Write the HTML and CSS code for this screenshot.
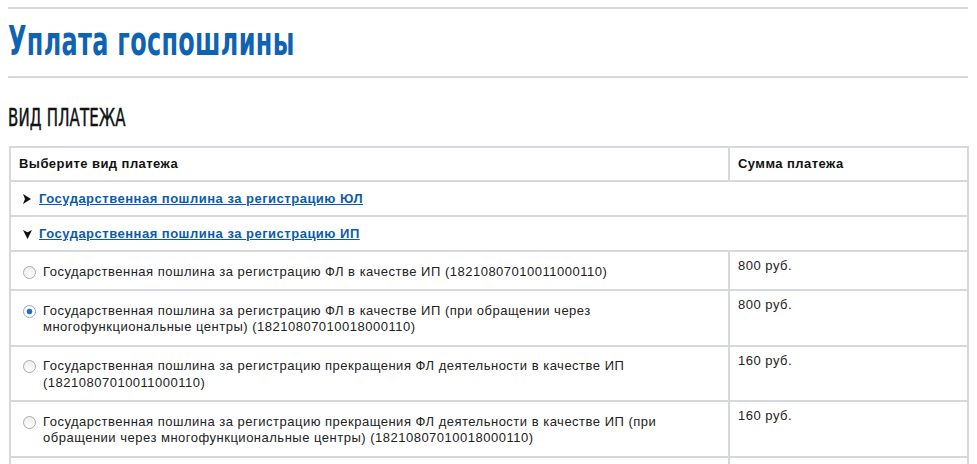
FILE: index.html
```html
<!DOCTYPE html>
<html lang="ru">
<head>
    <meta charset="UTF-8">
    <title>Уплата госпошлины</title>
    <link rel="stylesheet" href="styles.css">
</head>
<body>
<div class="page">
    <div class="page_title">
        <h1><span>Уплата госпошлины</span></h1>
    </div>
    <h2 class="section_title"><span>Вид платежа</span></h2>
    <table class="pay_table">
        <colgroup>
            <col class="col_name">
            <col class="col_sum">
        </colgroup>
        <tr class="head_row">
            <th>Выберите вид платежа</th>
            <th>Сумма платежа</th>
        </tr>
        <tr class="group_row">
            <td colspan="2">
                <svg class="arrow arrow_right" width="8" height="10" viewBox="0 0 8 10"><path d="M0 0 L8 5 L0 10 L2 5 Z"/></svg><a href="#">Государственная пошлина за регистрацию ЮЛ</a>
            </td>
        </tr>
        <tr class="group_row">
            <td colspan="2">
                <svg class="arrow arrow_down" width="9" height="9" viewBox="0 0 9 9"><path d="M0 0 L4.5 2.2 L9 0 L4.5 9 Z"/></svg><a href="#">Государственная пошлина за регистрацию ИП</a>
            </td>
        </tr>
        <tr class="item_row">
            <td>
                <label><input type="radio" name="pay"><span>Государственная пошлина за регистрацию ФЛ в качестве ИП (18210807010011000110)</span></label>
            </td>
            <td class="sum">800 руб.</td>
        </tr>
        <tr class="item_row">
            <td>
                <label><input type="radio" name="pay" checked><span>Государственная пошлина за регистрацию ФЛ в качестве ИП (при обращении через многофункциональные центры) (18210807010018000110)</span></label>
            </td>
            <td class="sum">800 руб.</td>
        </tr>
        <tr class="item_row">
            <td>
                <label><input type="radio" name="pay"><span>Государственная пошлина за регистрацию прекращения ФЛ деятельности в качестве ИП (18210807010011000110)</span></label>
            </td>
            <td class="sum">160 руб.</td>
        </tr>
        <tr class="item_row">
            <td>
                <label><input type="radio" name="pay"><span>Государственная пошлина за регистрацию прекращения ФЛ деятельности в качестве ИП (при обращении через многофункциональные центры) (18210807010018000110)</span></label>
            </td>
            <td class="sum">160 руб.</td>
        </tr>
        <tr class="item_row">
            <td>&nbsp;</td>
            <td class="sum">&nbsp;</td>
        </tr>
    </table>
</div>
</body>
</html>
```

FILE: styles.css
```css
html, body {
    margin: 0px;
    background-color: #fff;
    font-family: "Liberation Sans", Arial, sans-serif;
    font-size: 13px;
    letter-spacing: 0.5px;
    color: #222;
}

.page {
    padding: 7px 9px 0 8px;
}

.page_title {
    border-top: 2px solid #d5d9de;
    border-bottom: 2px solid #d5d9de;
    height: 67px;
}

.page_title h1 {
    margin: 0;
    padding-top: 8px;
    font-family: "DejaVu Sans Condensed", "DejaVu Sans", sans-serif;
    font-stretch: condensed;
    font-weight: bold;
    font-size: 40px;
    line-height: 48px;
    letter-spacing: 0.5px;
    color: #0f63b2;
}

.page_title h1 span,
.section_title span {
    display: inline-block;
    transform-origin: left center;
}

.page_title h1 span {
    transform: scaleX(0.665);
}

.section_title {
    margin: 0;
    padding-top: 25px;
    height: 43px;
    font-family: "DejaVu Sans Condensed", "DejaVu Sans", sans-serif;
    font-stretch: condensed;
    font-weight: normal;
    font-size: 25px;
    line-height: 30px;
    letter-spacing: 0.3px;
    text-transform: uppercase;
    color: #111;
    -webkit-text-stroke: 0.5px #111;
}

.section_title span {
    transform: scaleX(0.665);
}

.pay_table {
    width: 960px;
    border-collapse: collapse;
    table-layout: fixed;
    margin-left: 1px;
}

.col_name {
    width: 719px;
}

.pay_table th,
.pay_table td {
    border: 2px solid #d5d9de;
    text-align: left;
    vertical-align: top;
    line-height: 16px;
    padding: 0 8px;
}

.head_row th {
    padding-top: 8px;
    padding-bottom: 8px;
    font-weight: bold;
    letter-spacing: 0.45px;
    color: #111;
}

.group_row td {
    padding-top: 9px;
    padding-bottom: 8px;
    padding-left: 12px;
}

.group_row .arrow {
    fill: #111;
    vertical-align: -1px;
}

.group_row .arrow_right {
    margin-right: 8px;
}

.group_row .arrow_down {
    margin-right: 7px;
}

.group_row a {
    color: #0a5ca8;
    font-weight: bold;
    letter-spacing: 0.5px;
    text-decoration: underline;
}

.item_row td {
    padding-top: 11.5px;
    padding-bottom: 9px;
    line-height: 16.5px;
}

.item_row td.sum {
    padding-top: 6px;
}

.item_row label {
    display: flex;
    align-items: flex-start;
    padding-left: 4px;
}

.item_row label span {
    max-width: 617px;
}

.item_row input {
    -webkit-appearance: none;
    appearance: none;
    flex: none;
    width: 13px;
    height: 13px;
    margin: 2px 7px 0 0;
    border: 1px solid #a9a9a9;
    border-radius: 50%;
    background: linear-gradient(#eeeeee, #ffffff);
    box-sizing: border-box;
}

.item_row input:checked {
    border-color: #8aa9cf;
    background: radial-gradient(circle, #1a6fd0 0, #2470d0 2.5px, #ffffff 3.2px);
}
```
